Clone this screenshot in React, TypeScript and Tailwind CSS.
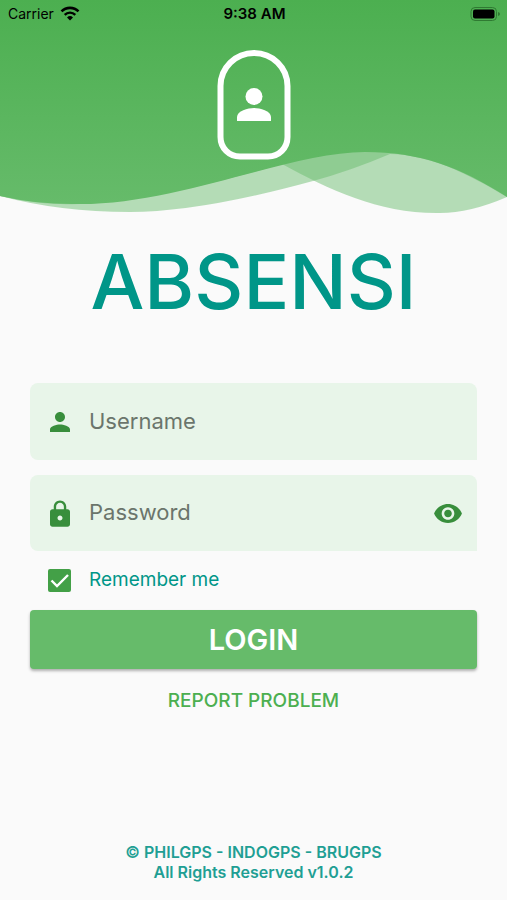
import { useState } from "react";

function StatusBar() {
  return (
    <div className="grid h-7 grid-cols-3 items-center pr-1.5 pl-2 text-black">
      <div className="flex items-center gap-1.5 text-sm">
        <span>Carrier</span>
        <svg className="h-4 w-5" viewBox="0 0 20 16" fill="none" stroke="black" aria-hidden="true">
          <path d="M1.500 5.400a12 12 0 0 1 17 0" strokeWidth="2.600" />
          <path d="M4.700 8.800a7.500 7.500 0 0 1 10.600 0" strokeWidth="2.400" />
          <path d="M10 14.500 7 11.500a4.300 4.300 0 0 1 6 0z" fill="black" stroke="none" />
        </svg>
      </div>
      <span className="text-center text-[15px] leading-5 font-semibold">9:38 AM</span>
      <svg className="h-4 w-8 justify-self-end" viewBox="0 0 32 16" aria-hidden="true">
        <rect x="2" y="1.500" width="25.500" height="13" rx="4" fill="none" stroke="#2f7a32" strokeWidth="1" />
        <rect x="4" y="3.500" width="21.500" height="9" rx="2" fill="black" />
        <path d="M29 6v4q2-.6 2-2t-2-2z" fill="#2f7a32" />
      </svg>
    </div>
  );
}

function Waves() {
  return (
    <svg className="absolute inset-0 h-full w-full" viewBox="0 0 507 220" preserveAspectRatio="none" aria-hidden="true">
      <defs>
        <linearGradient id="sky" x1="0" y1="0" x2="0" y2="1">
          <stop offset="0" stopColor="#4caf50" />
          <stop offset="1" stopColor="#66bb6a" />
        </linearGradient>
      </defs>
      <path d="M0 0H507V197Q470 213 440 213C380 214 330 190 282 164Q130 208 60 204Q30 203 0 196Z" fill="#66bb6a" fillOpacity="0.47" />
      <path d="M0 0H507V197C465 172 430 155 390 154Q350 171 313 181Q200 212 130 212Q60 212 0 196Z" fill="#66bb6a" fillOpacity="0.47" />
      <path d="M0 0H507V197C460 167 420 152 365 152C290 152 180 204 80 204Q40 205 0 196Z" fill="url(#sky)" />
    </svg>
  );
}

function Person({ className }: { className: string }) {
  return (
    <svg className={className} viewBox="4 4 16 16" fill="currentColor" aria-hidden="true">
      <path d="M12 12c2.210 0 4-1.790 4-4s-1.790-4-4-4-4 1.790-4 4 1.790 4 4 4zm0 2c-2.670 0-8 1.340-8 4v2h16v-2c0-2.660-5.330-4-8-4z" />
    </svg>
  );
}

export default function App() {
  const [visible, setVisible] = useState(false);
  return (
    <div className="flex min-h-screen flex-col bg-[#fafafa] font-['Inter',sans-serif]">
      <header className="relative h-[220px]">
        <Waves />
        <div className="relative">
          <StatusBar />
          <svg className="mx-auto mt-[21px] h-[112px] w-[76px] text-white" viewBox="0 0 76 112" aria-hidden="true">
            <path d="M4.500 37A33.500 33 0 0 1 71.500 37V88C71.500 99 63 107.500 52 107.500H24C13 107.500 4.500 99 4.500 88Z" fill="none" stroke="white" strokeWidth="6" />
            <circle cx="38" cy="47.500" r="8.500" fill="white" />
            <path d="M21 72v-4c0-6 11-9 17-9s17 3 17 9v4z" fill="white" />
          </svg>
        </div>
      </header>

      <main className="px-[30px]">
        <h1 className="pt-4 text-center text-[76px] leading-[90px] font-medium text-[#009688]">ABSENSI</h1>
        <form className="pt-[57px]" onSubmit={(e) => e.preventDefault()}>
          <label className="flex h-[77px] items-center rounded-t-lg rounded-bl-lg bg-[#e8f5e9] pr-4 pl-5 text-[#388e3c]">
            <Person className="h-5 w-5 shrink-0" />
            <input type="text" aria-label="Username" placeholder="Username" className="ml-[19px] min-w-0 flex-1 bg-transparent pb-0.5 text-[22px] leading-7 text-[#333] outline-none placeholder:text-[#6b756c]" />
          </label>
          <div className="mt-[15px] flex h-[76px] items-center rounded-t-lg rounded-bl-lg bg-[#e8f5e9] pr-[15px] pl-5 text-[#388e3c]">
            <svg className="h-[27px] w-5 shrink-0" viewBox="4 1 16 21" fill="currentColor" aria-hidden="true">
              <path d="M18 8h-1V6c0-2.760-2.240-5-5-5S7 3.240 7 6v2H6c-1.100 0-2 .9-2 2v10c0 1.100.9 2 2 2h12c1.100 0 2-.9 2-2V10c0-1.100-.9-2-2-2zm-6 9c-1.100 0-2-.9-2-2s.9-2 2-2 2 .9 2 2-.9 2-2 2zm3.100-9H8.900V6c0-1.710 1.390-3.100 3.100-3.100s3.100 1.390 3.100 3.100v2z" />
            </svg>
            <input type={visible ? "text" : "password"} aria-label="Password" placeholder="Password" className="ml-[19px] min-w-0 flex-1 bg-transparent pb-0.5 text-[22px] leading-7 text-[#333] outline-none placeholder:text-[#6b756c]" />
            <button type="button" aria-label="Show password" onClick={() => setVisible(!visible)}>
              <svg className="h-[19px] w-7" viewBox="1 4.500 22 15" fill="currentColor" aria-hidden="true">
                <path d="M12 4.500C7 4.500 2.730 7.610 1 12c1.730 4.390 6 7.500 11 7.500s9.270-3.110 11-7.500c-1.730-4.390-6-7.500-11-7.500zM12 17c-2.760 0-5-2.240-5-5s2.240-5 5-5 5 2.240 5 5-2.240 5-5 5zm0-8c-1.660 0-3 1.340-3 3s1.340 3 3 3 3-1.340 3-3-1.340-3-3-3z" />
              </svg>
            </button>
          </div>
          <label className="flex h-[59px] items-center pl-[18px] text-[19px] text-[#009688]">
            <span className="relative mr-[18px] h-[23px] w-[23px]">
              <input type="checkbox" defaultChecked className="peer block h-full w-full appearance-none rounded-xs border-2 border-[#43a047] checked:bg-[#43a047]" />
              <svg className="pointer-events-none absolute inset-0 hidden h-full w-full peer-checked:block" viewBox="0 0 23 23" fill="none" stroke="white" strokeWidth="2.400" aria-hidden="true">
                <path d="m3.500 11.500 5.500 5.500L20 6" />
              </svg>
            </span>
            Remember me
          </label>
          <button type="submit" className="h-[59px] w-full rounded bg-[#66bb6a] text-[29px] font-semibold text-white shadow-[0_2px_3px_rgba(0,0,0,0.3)]">LOGIN</button>
          <button type="button" className="mx-auto mt-4 block h-8 text-[19px] font-medium text-[#4caf50]">REPORT PROBLEM</button>
        </form>
      </main>

      <footer className="mt-auto pb-[18px] text-center text-base leading-5 font-semibold text-[#1f9f94]">
        <p>© PHILGPS - INDOGPS - BRUGPS</p>
        <p>All Rights Reserved v1.0.2</p>
      </footer>
    </div>
  );
}
